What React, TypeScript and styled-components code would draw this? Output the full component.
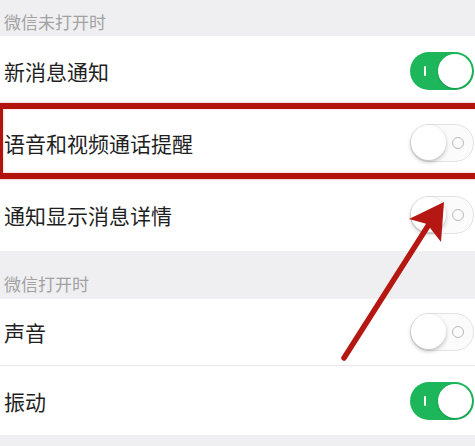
import React from "react";
import styled, { createGlobalStyle } from "styled-components";

const GlobalStyle = createGlobalStyle`
  html, body {
    margin: 0;
    padding: 0;
    background: #efeff1;
  }
  body {
    font-family: "Noto Sans CJK SC", "Noto Sans", sans-serif;
  }
`;

const Page = styled.div`
  position: relative;
  width: 475px;
  height: 446px;
  overflow: hidden;
  background: #efeff1;
`;

const SectionHeader = styled.div<{ $height: number }>`
  height: ${(p) => p.$height}px;
  display: flex;
  align-items: flex-end;
  padding: 0 0 ${(p) => (p.$height > 40 ? 3 : 2)}px 4px;
  box-sizing: border-box;
  font-size: 17px;
  line-height: 24px;
  color: #a2a2a2;
`;

const Group = styled.div`
  background: #ffffff;
  display: flex;
  flex-direction: column;
`;

const Row = styled.div<{ $height: number; $last?: boolean }>`
  position: relative;
  height: ${(p) => p.$height}px;
  display: flex;
  align-items: center;
  justify-content: space-between;
  padding: 0 1px 0 4px;
  box-sizing: border-box;
  border-bottom: ${(p) => (p.$last ? "none" : "1px solid #e8e8ec")};
`;

const Label = styled.span`
  font-size: 21px;
  color: #1f1f1f;
`;

const Highlight = styled.div`
  position: absolute;
  top: -4px;
  bottom: -1px;
  left: -3px;
  right: -12px;
  border: 6px solid #b3130f;
  box-shadow: 0 0 2px rgba(190, 40, 30, 0.5), inset 0 0 2px rgba(190, 40, 30, 0.4);
  pointer-events: none;
`;

const Track = styled.div<{ $on: boolean }>`
  position: relative;
  width: 64px;
  height: 38px;
  border-radius: 19px;
  box-sizing: border-box;
  background: ${(p) => (p.$on ? "#1db65b" : "#fbfbfb")};
  border: ${(p) => (p.$on ? "none" : "1.5px solid #e2e2e2")};
  flex-shrink: 0;
`;

const Knob = styled.div<{ $on: boolean }>`
  position: absolute;
  top: ${(p) => (p.$on ? 2 : 0)}px;
  ${(p) => (p.$on ? "right: 2px;" : "left: 0;")}
  width: ${(p) => (p.$on ? 34 : 35)}px;
  height: ${(p) => (p.$on ? 34 : 35)}px;
  border-radius: 50%;
  background: #ffffff;
  box-shadow: ${(p) =>
    p.$on ? "0 1px 2px rgba(0,0,0,0.2)" : "0 2px 4px rgba(0,0,0,0.25)"};
`;

const OnMark = styled.div`
  position: absolute;
  left: 14px;
  top: 14px;
  width: 2px;
  height: 10px;
  background: #ffffff;
  border-radius: 1px;
`;

const OffMark = styled.div`
  position: absolute;
  right: 9px;
  top: 12px;
  width: 10px;
  height: 10px;
  border-radius: 50%;
  border: 1.5px solid #b9b9b9;
`;

const Arrow = styled.svg`
  position: absolute;
  left: 0;
  top: 0;
  pointer-events: none;
`;

function Toggle({ on }: { on: boolean }) {
  return (
    <Track $on={on}>
      {on ? <OnMark /> : <OffMark />}
      <Knob $on={on} />
    </Track>
  );
}

export default function App() {
  return (
    <Page>
      <GlobalStyle />
      <SectionHeader $height={36}>微信未打开时</SectionHeader>
      <Group>
        <Row $height={71}>
          <Label>新消息通知</Label>
          <Toggle on />
        </Row>
        <Row $height={72}>
          <Label>语音和视频通话提醒</Label>
          <Toggle on={false} />
          <Highlight />
        </Row>
        <Row $height={72} $last>
          <Label>通知显示消息详情</Label>
          <Toggle on={false} />
        </Row>
      </Group>
      <SectionHeader $height={48}>微信打开时</SectionHeader>
      <Group>
        <Row $height={67}>
          <Label>声音</Label>
          <Toggle on={false} />
        </Row>
        <Row $height={69} $last>
          <Label>振动</Label>
          <Toggle on />
        </Row>
      </Group>
      <Arrow width="475" height="446" viewBox="0 0 475 446">
        <line
          x1="344"
          y1="358"
          x2="433"
          y2="218"
          stroke="#b51812"
          strokeWidth="5.5"
          strokeLinecap="round"
        />
        <polygon points="444,202 409,219 427,224 441,242" fill="#b51812" />
      </Arrow>
    </Page>
  );
}
